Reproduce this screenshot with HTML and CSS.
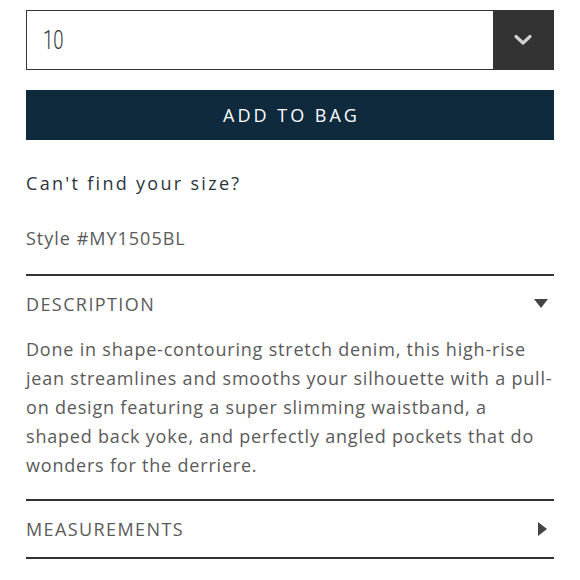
FILE: index.html
```html
<!DOCTYPE html>
<html>
<head>
<meta charset="utf-8">
<link rel="stylesheet" href="styles.css">
</head>
<body>
<div class="page">
  <div class="select">
    <div class="select-value"><span class="select-text">10</span></div>
    <div class="select-btn">
      <svg width="20" height="12" viewBox="0 0 20 12"><path d="M3 2.5 L10 9 L17 2.5" fill="none" stroke="#d0d0d0" stroke-width="3.2" stroke-linecap="round" stroke-linejoin="round"/></svg>
    </div>
  </div>
  <button class="add-btn">ADD TO BAG</button>
  <div class="find-size">Can't find your size?</div>
  <div class="style-no">Style #MY1505BL</div>
  <div class="section">
    <div class="section-head">
      <span>DESCRIPTION</span>
      <svg width="14" height="10" viewBox="0 0 14 10"><path d="M0 0 H14 L7 9 Z" fill="#444"/></svg>
    </div>
    <p class="section-body">Done in shape-contouring stretch denim, this high-rise jean streamlines and smooths your silhouette with a pull-on design featuring a super slimming waistband, a shaped back yoke, and perfectly angled pockets that do wonders for the derriere.</p>
  </div>
  <div class="section last">
    <div class="section-head">
      <span>MEASUREMENTS</span>
      <svg width="10" height="14" viewBox="0 0 10 14"><path d="M0 0 V14 L9 7 Z" fill="#444"/></svg>
    </div>
  </div>
</div>
</body>
</html>
```
FILE: styles.css
```css
html, body {
  margin: 0;
  padding: 0;
  background: #fff;
}
.page {
  padding: 10px 26px 0 26px;
  font-family: "Open Sans", "Lato", sans-serif;
}
.select {
  display: flex;
  height: 60px;
  border: 1px solid #333;
  box-sizing: border-box;
}
.select-value {
  flex: 1;
  display: flex;
  align-items: center;
  padding-left: 16px;
}
.select-text {
  display: inline-block;
  font-family: "Roboto", sans-serif;
  font-weight: 300;
  font-size: 25px;
  color: #333;
  transform: scaleX(0.74);
  transform-origin: left center;
}
.select-btn {
  width: 60px;
  background: #333;
  display: flex;
  align-items: center;
  justify-content: center;
}
.add-btn {
  display: block;
  width: 100%;
  height: 50px;
  margin-top: 20px;
  border: none;
  background: #0f293d;
  color: #fff;
  font-family: "Open Sans", sans-serif;
  font-size: 18px;
  letter-spacing: 3px;
  padding: 0 0 0 3px;
}
.find-size {
  margin-top: 31px;
  font-size: 18px;
  letter-spacing: 2.3px;
  color: #2a3540;
  line-height: 24px;
}
.style-no {
  margin-top: 31px;
  font-size: 18px;
  letter-spacing: 1px;
  color: #5a5a5a;
  line-height: 24px;
}
.section {
  margin-top: 24px;
  border-top: 2px solid #333;
}
.section.last {
  margin-top: 0;
  border-bottom: 2px solid #333;
}
.section-head {
  display: flex;
  justify-content: space-between;
  align-items: center;
  height: 56px;
  font-size: 18px;
  letter-spacing: 1.4px;
  color: #5a5a5a;
}
.section-head svg {
  margin-right: 6px;
}
.section-body {
  margin: 0;
  padding: 3px 0 19px 0;
  font-size: 18px;
  line-height: 29px;
  letter-spacing: 0.8px;
  color: #5a5a5a;
}
```
